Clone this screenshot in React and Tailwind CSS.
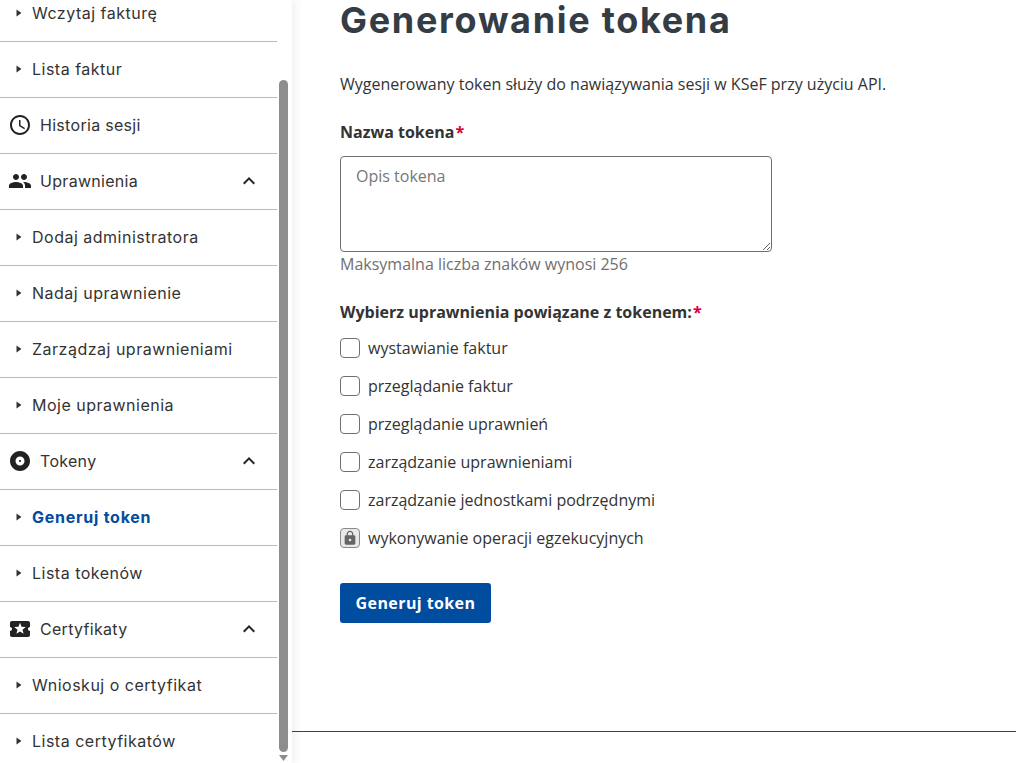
import React from 'react';
import { MdAccessTime, MdPeople, MdAlbum, MdLocalActivity, MdExpandLess, MdLock } from 'react-icons/md';

const sans = "font-['Open_Sans',sans-serif]";
const menuFont = "font-['Inter',sans-serif]";

const menu = [
  { label: 'Wczytaj fakturę' },
  { label: 'Lista faktur' },
  { label: 'Historia sesji', icon: MdAccessTime },
  { label: 'Uprawnienia', icon: MdPeople, open: true },
  { label: 'Dodaj administratora' },
  { label: 'Nadaj uprawnienie' },
  { label: 'Zarządzaj uprawnieniami' },
  { label: 'Moje uprawnienia' },
  { label: 'Tokeny', icon: MdAlbum, open: true },
  { label: 'Generuj token', active: true },
  { label: 'Lista tokenów' },
  { label: 'Certyfikaty', icon: MdLocalActivity, open: true },
  { label: 'Wnioskuj o certyfikat' },
  { label: 'Lista certyfikatów' },
];

const perms = [
  'wystawianie faktur',
  'przeglądanie faktur',
  'przeglądanie uprawnień',
  'zarządzanie uprawnieniami',
  'zarządzanie jednostkami podrzędnymi',
];

const MenuRow = ({ item }) => {
  const Icon = item.icon;
  return (
    <li className="h-[56px] shrink-0 border-b border-[#b9b9b9] pb-[2px] flex items-center">
      {Icon ? (
        <>
          <Icon className="ml-[8px] w-[24px] h-[24px] text-[#222222] shrink-0" />
          <span className="ml-[8px] text-[16px] tracking-[0.3px] text-[#333333]">{item.label}</span>
          {item.open && <MdExpandLess className="ml-auto mr-[16px] w-[24px] h-[24px] text-[#222222]" />}
        </>
      ) : (
        <>
          <svg className="ml-[16px] w-[6px] h-[8px] shrink-0" viewBox="0 0 6 8">
            <path d="M0.5 0.5 L5.5 4 L0.5 7.5 Z" fill="#333333" />
          </svg>
          <span className={`ml-[10px] text-[16px] ${item.active ? 'font-bold tracking-[0.75px] text-[#004c9f]' : 'tracking-[0.5px] text-[#333333]'}`}>
            {item.label}
          </span>
        </>
      )}
    </li>
  );
};

export default function App() {
  return (
    <div className={`flex h-[763px] w-[1016px] overflow-hidden bg-white ${sans}`}>
      {/* Menu boczne */}
      <aside className={`flex w-[292px] shrink-0 h-full overflow-hidden shadow-[4px_0_8px_rgba(0,0,0,0.06)] z-10 ${menuFont}`}>
        <ul className="w-[277px] shrink-0 -mt-[14px]">
          {menu.map((item) => (
            <MenuRow key={item.label} item={item} />
          ))}
        </ul>
        <div className="w-[15px] flex flex-col items-center pl-[1px] pr-[3px]">
          <div className="mt-[80px] w-[9px] h-[672px] rounded-[5px] bg-[#8d8d8d]" />
          <svg className="mt-[3px] w-[9px] h-[6px]" viewBox="0 0 9 6">
            <path d="M0 0 H9 L4.5 6 Z" fill="#8d8d8d" />
          </svg>
        </div>
      </aside>

      {/* Formularz */}
      <main className="flex-1 flex flex-col h-full">
        <div className="flex-1 pl-[48px] text-[#333333]">
          <h1 className={`h-[41px] leading-[40px] text-[36px] font-bold tracking-[1.7px] text-[#343c45] ${menuFont}`}>
            Generowanie tokena
          </h1>
          <p className="mt-[31px] text-[16px] leading-[24px]">
            Wygenerowany token służy do nawiązywania sesji w KSeF przy użyciu API.
          </p>
          <label className="block mt-[24px] text-[16px] leading-[24px] font-bold">
            Nazwa tokena<span className="ml-[1px] text-[#d5003c]">*</span>
          </label>
          <textarea
            placeholder="Opis tokena"
            className="block mt-[12px] w-[432px] h-[96px] rounded-[4px] border border-[#6f6f6f] px-[15px] py-[7px] text-[16px] leading-[24px] placeholder:text-[#777777] outline-none"
          />
          <p className="mt-0 text-[16px] leading-[24px] text-[#707070]">Maksymalna liczba znaków wynosi 256</p>
          <p className="mt-[24px] text-[16px] leading-[24px] font-bold">
            Wybierz uprawnienia powiązane z tokenem:<span className="ml-[1px] text-[#d5003c]">*</span>
          </p>
          <div className="mt-[5px] flex flex-col">
            {perms.map((perm) => (
              <label key={perm} className="h-[38px] flex items-center gap-[8px] text-[16px]">
                <span className="w-[20px] h-[20px] rounded-[4px] border border-[#6f6f6f] bg-white shrink-0" />
                {perm}
              </label>
            ))}
            <label className="h-[38px] flex items-center gap-[8px] text-[16px]">
              <span className="w-[20px] h-[20px] rounded-[4px] border border-[#8a8a8a] bg-[#e9e9e9] shrink-0 flex items-center justify-center">
                <MdLock className="w-[16px] h-[16px] text-[#666666]" />
              </span>
              wykonywanie operacji egzekucyjnych
            </label>
          </div>
          <button className="mt-[26px] h-[40px] w-[151px] rounded-[3px] bg-[#004c9f] text-white text-[16px] font-bold tracking-[0.4px]">
            Generuj token
          </button>
        </div>
        <div className="h-[32px] shrink-0">
          <div className="h-px bg-[#a5103f]" />
        </div>
      </main>
    </div>
  );
}
